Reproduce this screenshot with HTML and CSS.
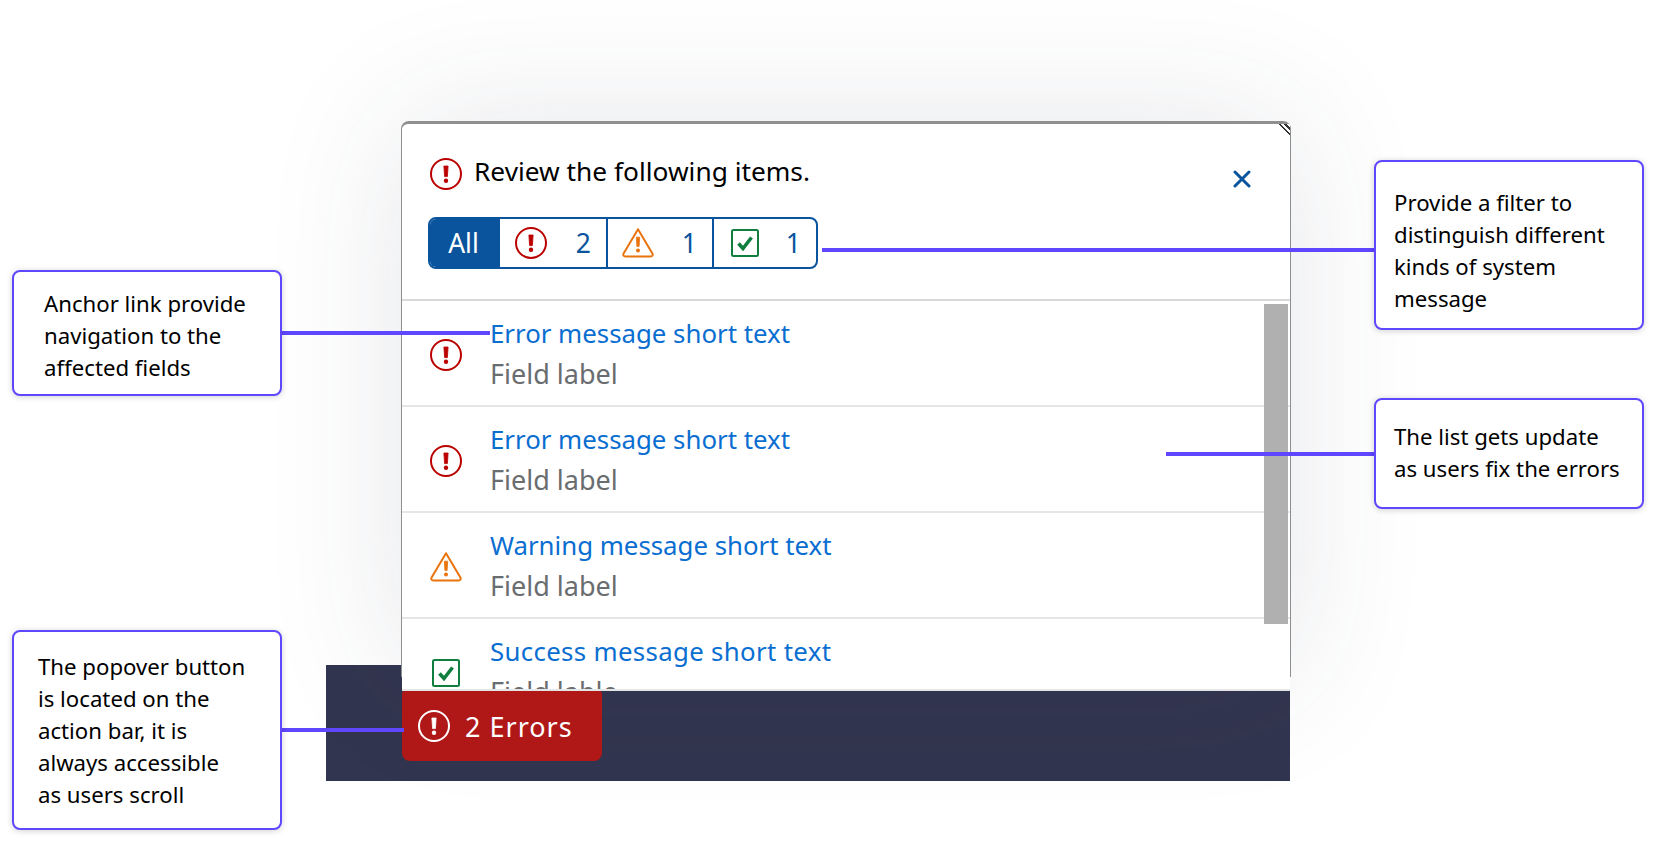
FILE: index.html
```html
<!DOCTYPE html>
<html lang="en">
<head>
	<meta charset="UTF-8">
	<title>Message popover</title>
	<link rel="stylesheet" href="styles.css">
</head>
<body>
	<svg class="defs" width="0" height="0">
		<symbol id="i-error" viewBox="0 0 32 32">
			<circle cx="16" cy="16" r="15" fill="none" stroke="currentColor" stroke-width="2"/>
			<path d="M13.9 8h4.2l-.7 10.6h-2.8z" fill="currentColor" stroke="currentColor" stroke-width=".8" stroke-linejoin="round"/>
			<circle cx="16" cy="22.8" r="2.2" fill="currentColor"/>
		</symbol>
		<symbol id="i-warning" viewBox="0 0 32 32">
			<path d="M16 2.2 30.4 26.6c.8 1.4-.1 3-1.7 3H3.3c-1.6 0-2.5-1.6-1.7-3z" fill="none" stroke="currentColor" stroke-width="2" stroke-linejoin="round"/>
			<path d="M14.3 10.2h3.4l-.6 9.2h-2.2z" fill="currentColor" stroke="currentColor" stroke-width=".8" stroke-linejoin="round"/>
			<circle cx="16" cy="23.6" r="2" fill="currentColor"/>
		</symbol>
		<symbol id="i-success" viewBox="0 0 28 28">
			<rect x="1" y="1" width="26" height="26" rx="1.5" fill="none" stroke="currentColor" stroke-width="2"/>
			<path d="M7.5 14.5 12 19.5 20.5 8.5" fill="none" stroke="currentColor" stroke-width="3.6"/>
		</symbol>
	</svg>

	<div class="stage">
		<div class="demo">
			<div class="popover">
				<span class="corner"></span>
				<div class="pHead">
					<div class="pTitleRow">
						<svg class="icon red"><use href="#i-error"/></svg>
						<span class="pTitle">Review the following items.</span>
						<svg class="close" viewBox="0 0 18 18"><path d="M2 2 16 16M16 2 2 16" stroke="currentColor" stroke-width="3" stroke-linecap="round"/></svg>
					</div>
					<div class="filter">
						<span class="seg all">All</span>
						<span class="seg"><svg class="icon red"><use href="#i-error"/></svg><b>2</b></span>
						<span class="seg"><svg class="icon orange"><use href="#i-warning"/></svg><b>1</b></span>
						<span class="seg"><svg class="icon small green"><use href="#i-success"/></svg><b>1</b></span>
					</div>
				</div>
				<div class="list">
					<div class="bar"></div>
					<ul>
						<li>
							<svg class="icon red"><use href="#i-error"/></svg>
							<div><p class="msg">Error message short text</p><p class="label">Field label</p></div>
						</li>
						<li>
							<svg class="icon red"><use href="#i-error"/></svg>
							<div><p class="msg">Error message short text</p><p class="label">Field label</p></div>
						</li>
						<li>
							<svg class="icon orange"><use href="#i-warning"/></svg>
							<div><p class="msg">Warning message short text</p><p class="label">Field label</p></div>
						</li>
						<li>
							<svg class="icon small green"><use href="#i-success"/></svg>
							<div><p class="msg wide">Success message short text</p><p class="label">Field lable</p></div>
						</li>
					</ul>
				</div>
			</div>
			<div class="actionBar">
				<span class="errBtn"><svg class="icon"><use href="#i-error"/></svg>2 Errors</span>
			</div>
		</div>

		<div class="note n1">Anchor link provide<br>navigation to the<br>affected fields</div>
		<div class="note n2">The popover button<br>is located on the<br>action bar, it is<br>always accessible<br>as users scroll</div>
		<div class="note n3">Provide a filter to<br>distinguish different<br>kinds of system<br>message</div>
		<div class="note n4">The list gets update<br>as users fix the errors</div>

		<span class="line l1"></span>
		<span class="line l2"></span>
		<span class="line l3"></span>
		<span class="line l4"></span>
	</div>
</body>
</html>
```

FILE: styles.css
```css
*{
	margin: 0;
	padding: 0;
	list-style: none;
	box-sizing: border-box;
}

body{
	background: #fff;
	font-family: "Noto Sans", "Open Sans", sans-serif;
	overflow: hidden;
}

.defs{
	position: absolute;
}

.stage{
	position: relative;
	width: 1656px;
	height: 842px;
	overflow: hidden;
}

.icon{
	width: 32px;
	height: 32px;
	flex: none;
}
.icon.small{
	width: 28px;
	height: 28px;
	margin: 0 2px;
}
.red{ color: #bb0000; }
.orange{ color: #e9730c; }
.green{ color: #107e3e; }

/* popover + action bar */
.demo{
	position: absolute;
	left: 326px;
	top: 121px;
	width: 966px;
}

.popover{
	position: relative;
	z-index: 1;
	margin-left: 75px;
	width: 890px;
	height: 556px;
	background: #fff;
	border: solid #8f8f8f;
	border-width: 3px 1px 0;
	border-radius: 8px 8px 0 0;
	box-shadow: 0 0 140px rgba(50, 60, 80, .12);
}

.corner{
	position: absolute;
	right: 0;
	top: 0;
	width: 13px;
	height: 13px;
	background: repeating-linear-gradient(45deg, #fff 0 2px, #333 2px 4px);
	clip-path: polygon(0 0, 100% 0, 100% 100%);
}

.pHead{
	height: 177px;
	padding: 34px 0 0 26px;
	border-bottom: 2px solid #d9d9d9;
}
.pTitleRow{
	display: flex;
	align-items: center;
	gap: 12px;
	height: 32px;
	margin-left: 2px;
}
.pTitle{
	margin-bottom: 7px;
	font-size: 26.3px;
	color: #000;
}
.close{
	width: 18px;
	height: 18px;
	margin: 10px 39px 0 auto;
	color: #0a549e;
}

.filter{
	display: inline-flex;
	margin-top: 27px;
	height: 52px;
	border: 2px solid #0a549e;
	border-radius: 8px;
	overflow: hidden;
}
.seg{
	display: flex;
	align-items: center;
	justify-content: space-between;
	width: 106px;
	padding: 0 15px 0 14px;
	border-left: 2px solid #0a549e;
	color: #0a549e;
	font-size: 26.5px;
}
.seg:nth-child(2){
	padding-left: 15px;
	border-left: 0;
}
.seg:nth-child(4){
	width: 104px;
	padding-left: 15px;
}
.seg b{
	font-weight: 400;
}
.seg.all{
	width: 70px;
	padding: 0 3px 0 0;
	border-left: 0;
	justify-content: center;
	background: #0a549e;
	color: #fff;
}

.list{
	position: relative;
	height: 390px;
	overflow: hidden;
	background: #fff;
	border-bottom: 2px solid #e5e5e5;
}
.bar{
	position: absolute;
	right: 2px;
	top: 3px;
	width: 24px;
	height: 320px;
	background: #b0b0b0;
}
.list li{
	display: flex;
	align-items: center;
	gap: 28px;
	height: 106px;
	padding-left: 28px;
	border-bottom: 2px solid #e5e5e5;
}
.list li .icon{
	margin-top: 4px;
}
.msg{
	font-size: 25.8px;
	line-height: 34px;
	color: #0a6ed1;
}
.msg.wide{
	letter-spacing: .33px;
}
.label{
	margin-top: 7px;
	font-size: 27px;
	line-height: 34px;
	color: #6a6d70;
}

.actionBar{
	margin-top: -12px;
	height: 116px;
	padding: 26px 0 0 76px;
	width: 964px;
	background: #32354f;
}
.errBtn{
	position: relative;
	z-index: 2;
	display: flex;
	align-items: center;
	gap: 15px;
	width: 200px;
	height: 70px;
	padding-left: 16px;
	background: #b01818;
	border-radius: 3px 3px 8px 8px;
	color: #fff;
	font-size: 27px;
	letter-spacing: 1px;
}

/* annotations */
.note{
	position: absolute;
	z-index: 3;
	background: #fff;
	border: 2px solid #5f46ff;
	border-radius: 8px;
	box-shadow: 0 1px 6px rgba(0, 0, 0, .18);
	font-size: 22.2px;
	line-height: 32px;
	color: #000;
}
.n1{ left: 12px; top: 270px; width: 270px; height: 126px; padding: 16px 0 0 30px; }
.n2{ left: 12px; top: 630px; width: 270px; height: 200px; padding: 19px 0 0 24px; }
.n3{ left: 1374px; top: 160px; width: 270px; height: 170px; padding: 25px 0 0 18px; }
.n4{ left: 1374px; top: 398px; width: 270px; height: 111px; padding: 21px 0 0 18px; }

.line{
	position: absolute;
	z-index: 2;
	height: 4px;
	background: #5f46ff;
}
.l1{ left: 282px; top: 331px; width: 208px; }
.l2{ left: 282px; top: 728px; width: 122px; }
.l3{ left: 822px; top: 248px; width: 553px; }
.l4{ left: 1166px; top: 452px; width: 209px; }
```
